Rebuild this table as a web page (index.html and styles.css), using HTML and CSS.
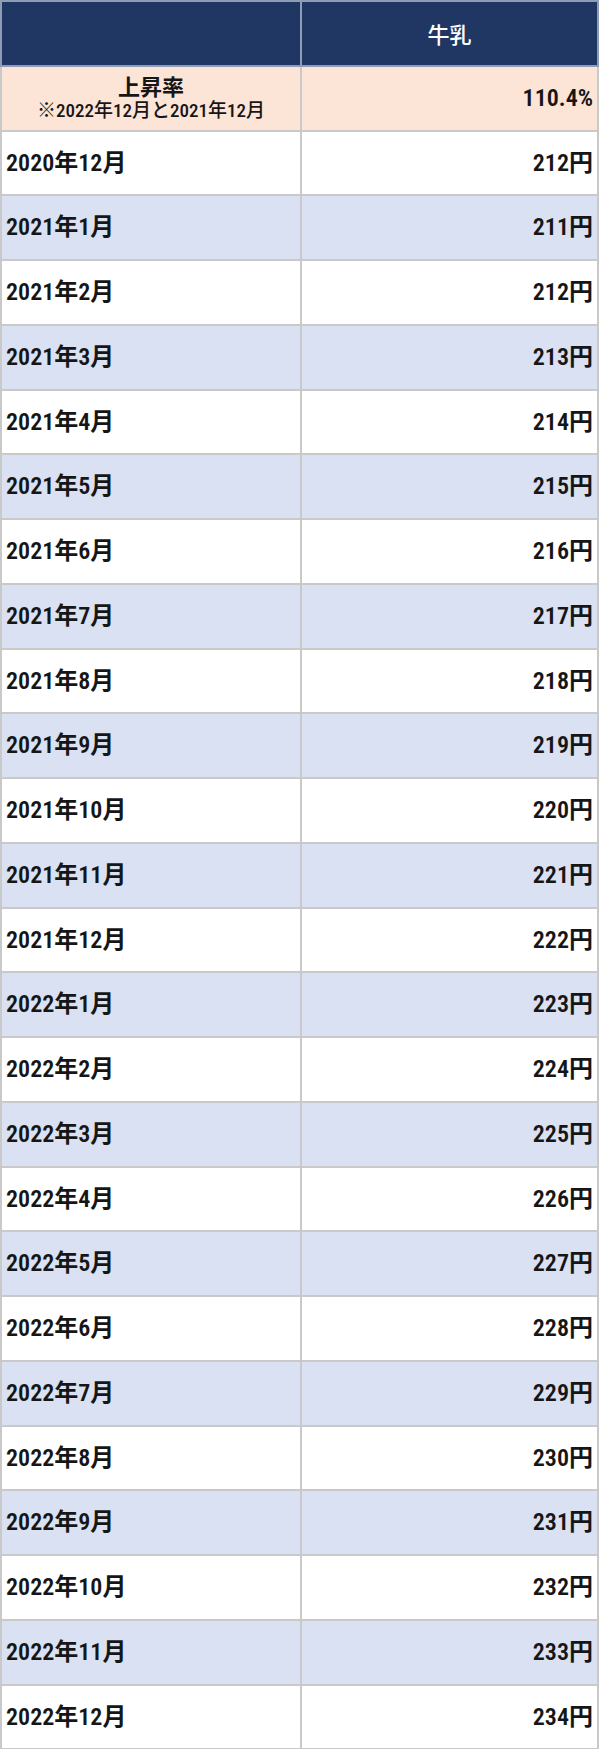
FILE: index.html
```html
<!DOCTYPE html>
<html lang="ja">
<head>
<meta charset="utf-8">
<title>牛乳 価格推移</title>
<link rel="stylesheet" href="styles.css">
</head>
<body>
<table class="price-table">
  <thead>
    <tr class="head-row">
      <th class="cell-label"></th>
      <th class="cell-item">牛乳</th>
    </tr>
  </thead>
  <tbody>
    <tr class="rate-row">
      <td class="cell-label rate-label">
        <div class="rate-title">上昇率</div>
        <div class="rate-note">※2022年12月と2021年12月</div>
      </td>
      <td class="cell-value">110.4%</td>
    </tr>
    <tr><td class="cell-label">2020年12月</td><td class="cell-value">212円</td></tr>
    <tr class="alt"><td class="cell-label">2021年1月</td><td class="cell-value">211円</td></tr>
    <tr><td class="cell-label">2021年2月</td><td class="cell-value">212円</td></tr>
    <tr class="alt"><td class="cell-label">2021年3月</td><td class="cell-value">213円</td></tr>
    <tr><td class="cell-label">2021年4月</td><td class="cell-value">214円</td></tr>
    <tr class="alt"><td class="cell-label">2021年5月</td><td class="cell-value">215円</td></tr>
    <tr><td class="cell-label">2021年6月</td><td class="cell-value">216円</td></tr>
    <tr class="alt"><td class="cell-label">2021年7月</td><td class="cell-value">217円</td></tr>
    <tr><td class="cell-label">2021年8月</td><td class="cell-value">218円</td></tr>
    <tr class="alt"><td class="cell-label">2021年9月</td><td class="cell-value">219円</td></tr>
    <tr><td class="cell-label">2021年10月</td><td class="cell-value">220円</td></tr>
    <tr class="alt"><td class="cell-label">2021年11月</td><td class="cell-value">221円</td></tr>
    <tr><td class="cell-label">2021年12月</td><td class="cell-value">222円</td></tr>
    <tr class="alt"><td class="cell-label">2022年1月</td><td class="cell-value">223円</td></tr>
    <tr><td class="cell-label">2022年2月</td><td class="cell-value">224円</td></tr>
    <tr class="alt"><td class="cell-label">2022年3月</td><td class="cell-value">225円</td></tr>
    <tr><td class="cell-label">2022年4月</td><td class="cell-value">226円</td></tr>
    <tr class="alt"><td class="cell-label">2022年5月</td><td class="cell-value">227円</td></tr>
    <tr><td class="cell-label">2022年6月</td><td class="cell-value">228円</td></tr>
    <tr class="alt"><td class="cell-label">2022年7月</td><td class="cell-value">229円</td></tr>
    <tr><td class="cell-label">2022年8月</td><td class="cell-value">230円</td></tr>
    <tr class="alt"><td class="cell-label">2022年9月</td><td class="cell-value">231円</td></tr>
    <tr><td class="cell-label">2022年10月</td><td class="cell-value">232円</td></tr>
    <tr class="alt"><td class="cell-label">2022年11月</td><td class="cell-value">233円</td></tr>
    <tr><td class="cell-label">2022年12月</td><td class="cell-value">234円</td></tr>
  </tbody>
</table>
</body>
</html>
```

FILE: styles.css
```css
html, body {
  margin: 0;
  padding: 0;
  background: #ffffff;
}

.price-table {
  width: 599px;
  border-collapse: collapse;
  table-layout: fixed;
  font-family: "Roboto", "Noto Sans CJK JP", sans-serif;
  font-stretch: 75%;
  font-weight: 600;
  color: #161616;
}

.price-table th,
.price-table td {
  border: 2px solid #c9c9c9;
  height: 64.75px;
  padding: 0 4px;
  box-sizing: border-box;
  vertical-align: middle;
  font-size: 24px;
  line-height: 1.1;
}

.cell-label {
  width: 300px;
  text-align: left;
}

.cell-item {
  text-align: center;
}

.cell-value {
  text-align: right;
}

.head-row th {
  background: #203764;
  color: #ffffff;
  font-size: 22px;
  font-family: "Noto Sans CJK JP", sans-serif;
  font-weight: 500;
  border-color: #8e9cb6;
}

.rate-row td {
  background: #fce4d6;
}

.rate-label {
  text-align: center;
}

.rate-title {
  font-size: 22px;
  line-height: 25px;
  font-weight: 700;
}

.rate-note {
  font-size: 19px;
  line-height: 21px;
  font-weight: 500;
}

.alt td {
  background: #d9e1f2;
}
```
